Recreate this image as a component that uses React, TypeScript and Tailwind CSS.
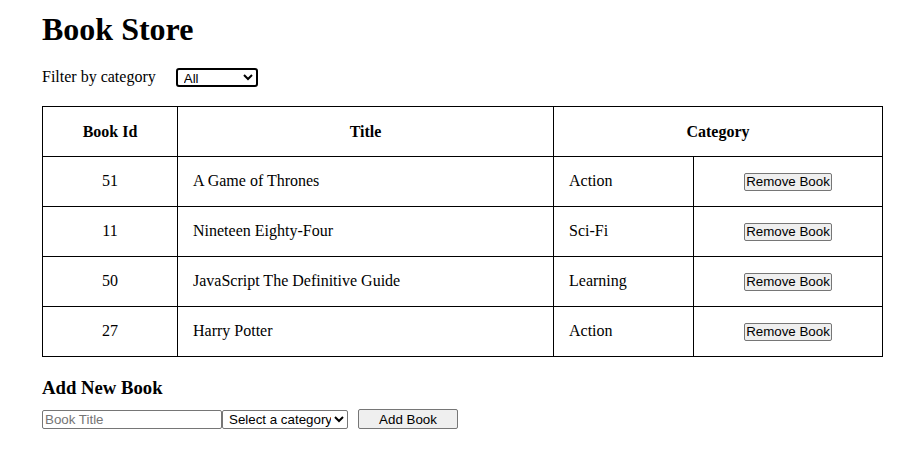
import { useState } from "react";

type Book = { id: number; title: string; category: string };

const App = () => {
  const [books, setBooks] = useState<Book[]>([
    { id: 51, title: "A Game of Thrones", category: "Action" },
    { id: 11, title: "Nineteen Eighty-Four", category: "Sci-Fi" },
    { id: 50, title: "JavaScript The Definitive Guide", category: "Learning" },
    { id: 27, title: "Harry Potter", category: "Action" },
  ]);
  const [filter, setFilter] = useState("All");
  const [title, setTitle] = useState("");
  const [category, setCategory] = useState("");

  const shown = books.filter((b) => filter === "All" || b.category === filter);

  const addBook = () => {
    if (!title || !category) return;
    setBooks([...books, { id: Math.floor(Math.random() * 100), title, category }]);
    setTitle("");
    setCategory("");
  };

  return (
    <div className="min-h-screen bg-white px-[42px] pt-[11px] text-black font-['Liberation_Serif',serif]">
      <h1 className="text-[32px] font-bold leading-[37px]">Book Store</h1>

      <div className="mt-[20px] flex h-[19px] items-start">
        <span className="text-[16px] leading-[18px]">Filter by category</span>
        <select
          value={filter}
          onChange={(e) => setFilter(e.target.value)}
          className="ml-[20px] h-[19px] w-[82px] rounded-[3px] border-2 border-black bg-white py-0 pl-[2px] text-[13.33px] font-['Liberation_Sans',Arial,sans-serif]"
        >
          <option>All</option>
          <option>Action</option>
          <option>Sci-Fi</option>
          <option>Learning</option>
        </select>
      </div>

      <table className="mt-[19px] w-[840px] table-fixed border-collapse text-[16px] leading-[17px]">
        <colgroup>
          <col className="w-[135px]" />
          <col className="w-[376px]" />
          <col className="w-[140px]" />
          <col className="w-[189px]" />
        </colgroup>
        <thead>
          <tr>
            <th className="border border-black py-4 text-center font-bold">Book Id</th>
            <th className="border border-black py-4 text-center font-bold">Title</th>
            <th colSpan={2} className="border border-black py-4 text-center font-bold">
              Category
            </th>
          </tr>
        </thead>
        <tbody>
          {shown.map((b) => (
            <tr key={"book#" + b.id}>
              <td className="border border-black pt-[15px] pb-[17px] text-center">{b.id}</td>
              <td className="border border-black px-[15px] pt-[15px] pb-[17px]">{b.title}</td>
              <td className="border border-black px-[15px] pt-[15px] pb-[17px]">{b.category}</td>
              <td className="border border-black py-0 text-center">
                <button
                  onClick={() => setBooks(books.filter((x) => x.id !== b.id))}
                  className="mx-auto block h-[18px] rounded-[2px] border border-[#767676] bg-[#efefef] px-[1px] text-[13.33px] leading-[14px] font-['Liberation_Sans',Arial,sans-serif]"
                >
                  Remove Book
                </button>
              </td>
            </tr>
          ))}
        </tbody>
      </table>

      <h3 className="mt-[20px] text-[18.72px] font-bold leading-[21px]">Add New Book</h3>

      <div className="mt-[11px] flex items-center font-['Liberation_Sans',Arial,sans-serif] text-[13.33px]">
        <input
          value={title}
          onChange={(e) => setTitle(e.target.value)}
          placeholder="Book Title"
          className="h-[19px] w-[180px] rounded-[2px] border border-[#767676] px-[2px] leading-[15px] placeholder:text-[#757575]"
        />
        <select
          value={category}
          onChange={(e) => setCategory(e.target.value)}
          className="h-[19px] w-[126px] rounded-[2px] border border-[#767676] bg-white py-0 pl-[2px]"
        >
          <option value="">Select a category</option>
          <option>Action</option>
          <option>Sci-Fi</option>
          <option>Learning</option>
        </select>
        <button
          onClick={addBook}
          className="ml-[10px] h-[20px] w-[100px] rounded-[2px] border border-[#767676] bg-[#efefef] leading-[15px]"
        >
          Add Book
        </button>
      </div>
    </div>
  );
};

export default App;
